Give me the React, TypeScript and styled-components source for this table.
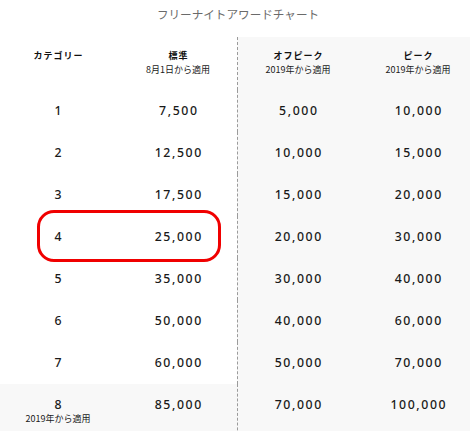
import React from "react";
import styled, { createGlobalStyle } from "styled-components";

const GlobalStyle = createGlobalStyle`
  html, body {
    margin: 0;
    padding: 0;
    background: #ffffff;
    overflow: hidden;
  }
  body {
    font-family: "Noto Sans", "Noto Sans CJK JP", sans-serif;
    color: #1f1f1f;
  }
`;

const Chart = styled.div`
  width: 480px;
  margin-left: -2px;
  position: relative;
`;

const Title = styled.h2`
  margin: 0;
  padding: 6px 0 15px;
  height: 16px;
  line-height: 16px;
  text-align: center;
  font-family: "Noto Sans CJK JP", sans-serif;
  font-size: 11.6px;
  font-weight: 400;
  color: #6a6a6a;
`;

const Row = styled.div`
  display: grid;
  grid-template-columns: repeat(4, 120px);
  position: relative;
`;

const Cell = styled.div<{ $shaded?: boolean; $divider?: boolean; $header?: boolean }>`
  box-sizing: border-box;
  text-align: center;
  padding: ${(p) => (p.$header ? "12px 0 14px" : "14px 0")};
  min-height: ${(p) => (p.$header ? "53px" : "42px")};
  background: ${(p) => (p.$shaded ? "#f8f8f8" : "transparent")};
  border-left: ${(p) => (p.$divider ? "1px dashed #9b9b9b" : "1px solid transparent")};
  margin-left: -1px;
`;

const HeadLabel = styled.div`
  font-family: "Noto Sans CJK JP", sans-serif;
  font-weight: 700;
  font-size: 9px;
  letter-spacing: 1px;
  padding-left: 1px;
  line-height: 13.5px;
  color: #111;
`;

const SubLabel = styled.div`
  font-family: "Noto Sans CJK JP", sans-serif;
  font-size: 9px;
  line-height: 13.5px;
  color: #1a1a1a;
`;

const Value = styled.div`
  font-family: "Noto Sans", sans-serif;
  font-weight: 500;
  font-size: 12.3px;
  letter-spacing: 1.6px;
  padding-left: 1.6px;
  line-height: 14px;
  color: #1a1a1a;
`;

const Highlight = styled.div`
  position: absolute;
  left: 39px;
  top: -6px;
  width: 184px;
  height: 52px;
  box-sizing: border-box;
  border: 3px solid #f00000;
  border-radius: 17px;
  pointer-events: none;
`;

type RowData = {
  cat: string;
  note?: string;
  values: [string, string, string];
  highlight?: boolean;
};

const rows: RowData[] = [
  { cat: "1", values: ["7,500", "5,000", "10,000"] },
  { cat: "2", values: ["12,500", "10,000", "15,000"] },
  { cat: "3", values: ["17,500", "15,000", "20,000"] },
  { cat: "4", values: ["25,000", "20,000", "30,000"], highlight: true },
  { cat: "5", values: ["35,000", "30,000", "40,000"] },
  { cat: "6", values: ["50,000", "40,000", "60,000"] },
  { cat: "7", values: ["60,000", "50,000", "70,000"] },
  { cat: "8", note: "2019年から適用", values: ["85,000", "70,000", "100,000"] },
];

export default function App() {
  return (
    <>
      <GlobalStyle />
      <Chart>
        <Title>フリーナイトアワードチャート</Title>
        <Row>
          <Cell $header>
            <HeadLabel>カテゴリー</HeadLabel>
          </Cell>
          <Cell $header>
            <HeadLabel>標準</HeadLabel>
            <SubLabel>8月1日から適用</SubLabel>
          </Cell>
          <Cell $header $shaded $divider>
            <HeadLabel>オフピーク</HeadLabel>
            <SubLabel>2019年から適用</SubLabel>
          </Cell>
          <Cell $header $shaded>
            <HeadLabel>ピーク</HeadLabel>
            <SubLabel>2019年から適用</SubLabel>
          </Cell>
        </Row>
        {rows.map((r) => {
          const full = !!r.note;
          return (
            <Row key={r.cat}>
              <Cell $shaded={full}>
                <Value>{r.cat}</Value>
                {r.note && <SubLabel>{r.note}</SubLabel>}
              </Cell>
              <Cell $shaded={full}>
                <Value>{r.values[0]}</Value>
              </Cell>
              <Cell $shaded $divider>
                <Value>{r.values[1]}</Value>
              </Cell>
              <Cell $shaded>
                <Value>{r.values[2]}</Value>
              </Cell>
              {r.highlight && <Highlight />}
            </Row>
          );
        })}
      </Chart>
    </>
  );
}
